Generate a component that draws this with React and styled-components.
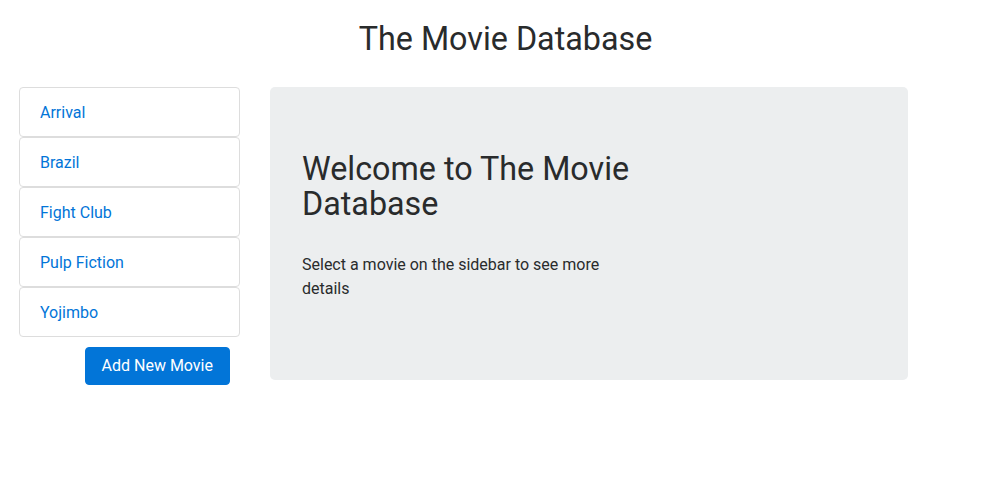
import styled, { createGlobalStyle } from "styled-components";

const GlobalStyle = createGlobalStyle`
  body {
    margin: 0;
    padding: 0;
    font-family: Roboto, "Liberation Sans", Arial, sans-serif;
    font-size: 16px;
    line-height: 1.5;
    color: #292b2c;
    background: #fff;
  }
`;

const Page = styled.div`
  width: 1005px;
`;

const Title = styled.h1`
  margin: 20px 0 28px;
  font-size: 32.3px;
  font-weight: 400;
  line-height: 1.2;
  text-align: center;
  padding-left: 6px;
`;

const Layout = styled.div`
  display: grid;
  grid-template-columns: 221px 638px;
  column-gap: 30px;
  padding: 0 19px;
  align-items: start;
`;

const Sidebar = styled.aside`
  display: flex;
  flex-direction: column;
`;

const MovieList = styled.ul`
  list-style: none;
  margin: 0;
  padding: 0;
`;

const MovieItem = styled.li`
  border: 1px solid #dddddd;
  border-radius: 4px;
  padding: 13px 20px 11px;
  line-height: 24px;
  color: #0275d8;
  cursor: pointer;
`;

const AddButton = styled.button`
  align-self: flex-end;
  margin: 10px 10px 0 0;
  height: 38px;
  padding: 1px 16px 0;
  border: 1px solid #0275d8;
  border-radius: 4px;
  background: #0275d8;
  color: #fff;
  font-family: inherit;
  font-size: 16px;
  line-height: 1.5;
  cursor: pointer;
`;

const Jumbotron = styled.section`
  background: #eceeef;
  border-radius: 5px;
  padding: 65px 32px 63px;
`;

const Intro = styled.div`
  max-width: 330px;
`;

const Heading = styled.h1`
  margin: 0 0 30px;
  font-size: 32.3px;
  font-weight: 400;
  line-height: 1.1;
`;

const Lead = styled.p`
  margin: 0 0 16px;
  font-size: 16px;
  line-height: 24px;
`;

const movies = ["Arrival", "Brazil", "Fight Club", "Pulp Fiction", "Yojimbo"];

export default function App() {
  return (
    <>
      <GlobalStyle />
      <Page>
        <Title>The Movie Database</Title>
        <Layout>
          <Sidebar>
            <MovieList>
              {movies.map((m) => (
                <MovieItem key={m}>{m}</MovieItem>
              ))}
            </MovieList>
            <AddButton>Add New Movie</AddButton>
          </Sidebar>
          <Jumbotron>
            <Intro>
              <Heading>Welcome to The Movie Database</Heading>
              <Lead>Select a movie on the sidebar to see more details</Lead>
            </Intro>
          </Jumbotron>
        </Layout>
      </Page>
    </>
  );
}
